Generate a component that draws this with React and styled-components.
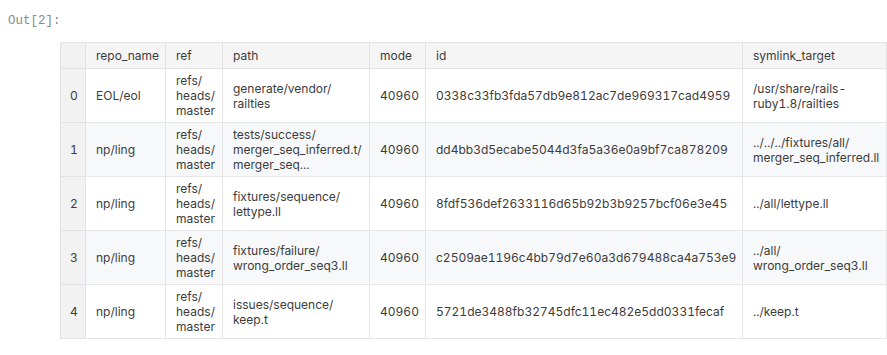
import React from 'react';
import styled, { createGlobalStyle } from 'styled-components';

const GlobalStyle = createGlobalStyle`
  body {
    margin: 0;
    background: #ffffff;
    font-family: Inter, "Noto Sans", sans-serif;
  }
`;

const columns = [
  { key: 'idx', label: '', width: 25 },
  { key: 'repo', label: 'repo_name', width: 80 },
  { key: 'ref', label: 'ref', width: 57 },
  { key: 'path', label: 'path', width: 147 },
  { key: 'mode', label: 'mode', width: 56 },
  { key: 'id', label: 'id', width: 317 },
  { key: 'link', label: 'symlink_target', width: 144 },
];

const ref = ['refs/', 'heads/', 'master'];

const rows = [
  {
    repo: 'EOL/eol',
    path: ['generate/vendor/', 'railties'],
    id: '0338c33fb3fda57db9e812ac7de969317cad4959',
    link: ['/usr/share/rails-', 'ruby1.8/railties'],
  },
  {
    repo: 'np/ling',
    path: ['tests/success/', 'merger_seq_inferred.t/', 'merger_seq...'],
    id: 'dd4bb3d5ecabe5044d3fa5a36e0a9bf7ca878209',
    link: ['../../../fixtures/all/', 'merger_seq_inferred.ll'],
  },
  {
    repo: 'np/ling',
    path: ['fixtures/sequence/', 'lettype.ll'],
    id: '8fdf536def2633116d65b92b3b9257bcf06e3e45',
    link: ['../all/lettype.ll'],
  },
  {
    repo: 'np/ling',
    path: ['fixtures/failure/', 'wrong_order_seq3.ll'],
    id: 'c2509ae1196c4bb79d7e60a3d679488ca4a753e9',
    link: ['../all/', 'wrong_order_seq3.ll'],
  },
  {
    repo: 'np/ling',
    path: ['issues/sequence/', 'keep.t'],
    id: '5721de3488fb32745dfc11ec482e5dd0331fecaf',
    link: ['../keep.t'],
  },
];

function Lines({ items }) {
  return items.map((t, i) => (
    <React.Fragment key={i}>
      {i > 0 && <br />}
      {t}
    </React.Fragment>
  ));
}

function App() {
  return (
    <>
      <GlobalStyle />
      <Output>
        <Prompt>Out[2]:</Prompt>
        <TableWrap>
          <Table>
            <colgroup>
              {columns.map((c) => (
                <col key={c.key} style={{ width: c.width }} />
              ))}
            </colgroup>
            <thead>
              <tr>
                {columns.map((c) => (
                  <Th key={c.key} $index={c.key === 'idx'}>{c.label}</Th>
                ))}
              </tr>
            </thead>
            <tbody>
              {rows.map((r, i) => (
                <Row key={i} $odd={i % 2 === 1}>
                  <IndexCell>{i}</IndexCell>
                  <Td>{r.repo}</Td>
                  <Td><Lines items={ref} /></Td>
                  <Td><Lines items={r.path} /></Td>
                  <Td>40960</Td>
                  <Td>{r.id}</Td>
                  <Td><Lines items={r.link} /></Td>
                </Row>
              ))}
            </tbody>
          </Table>
        </TableWrap>
      </Output>
    </>
  );
}

const Output = styled.div`
  padding: 13px 0 0 8px;
`;

const Prompt = styled.div`
  font-family: "Liberation Mono", "DejaVu Sans Mono", monospace;
  font-size: 12.5px;
  line-height: 16px;
  color: #8a8a8a;
`;

const TableWrap = styled.div`
  margin-top: 13px;
  padding-left: 52px;
`;

const Table = styled.table`
  width: 826px;
  border-collapse: collapse;
  table-layout: fixed;
  font-size: 12px;
  line-height: 15px;
  font-variant-numeric: tabular-nums;
  color: #3c3c3c;
  border: 1px solid #e3e3e3;
`;

const Th = styled.th`
  font-weight: 400;
  text-align: left;
  padding: 5px 10px;
  background: ${(p) => (p.$index ? '#f2f2f2' : '#f5f5f5')};
  border: 1px solid #e3e3e3;
  white-space: nowrap;
`;

const Row = styled.tr`
  background: ${(p) => (p.$odd ? '#f7f8fa' : '#ffffff')};
`;

const Td = styled.td`
  padding: 4px 10px;
  vertical-align: middle;
  border: 1px solid #e6e6e6;
  white-space: nowrap;
`;

const IndexCell = styled(Td)`
  background: #f2f2f2;
  text-align: center;
  padding: 4px 4px 4px 6px;
  border-color: #e3e3e3;
`;

export default App;
